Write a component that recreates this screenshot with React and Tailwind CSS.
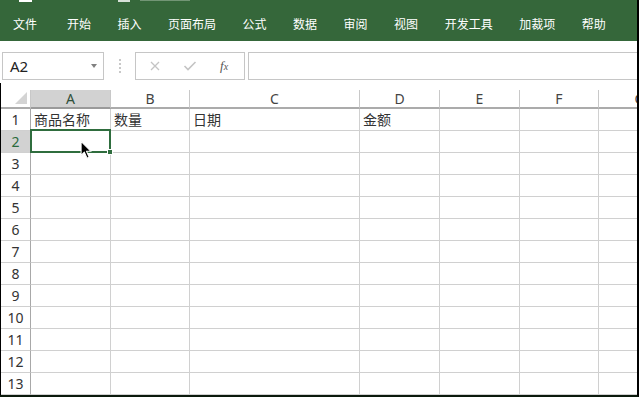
import React from 'react';

const tabs = ['文件', '开始', '插入', '页面布局', '公式', '数据', '审阅', '视图', '开发工具', '加裁项', '帮助'];
const cols = ['A', 'B', 'C', 'D', 'E', 'F', 'G'];
const rows = Array.from({ length: 13 }, (_, i) => i + 1);
const cjk = { fontFamily: '"Noto Sans CJK SC", "Noto Sans", sans-serif' };
const latin = { fontFamily: '"Noto Sans", "Liberation Sans", "Noto Sans CJK SC", sans-serif' };

const cellText = { 1: { A: '商品名称', B: '数量', C: '日期', D: '金额' } };

const Cursor = () => (
  <svg width="13" height="20" viewBox="0 0 12 18" className="absolute left-[80px] top-[140px]">
    <path d="M1 1 L1 14 L4 11 L6.5 16.5 L8.5 15.6 L6 10.2 L10.2 10.2 Z" fill="#000" stroke="#fff" strokeWidth="1" strokeLinejoin="round" />
  </svg>
);

export default function App() {
  return (
    <div className="relative w-[639px] h-[397px] overflow-hidden bg-white border-r-2 border-b-2 border-r-black border-b-[#0b1a0c]" style={cjk}>
      {/* ribbon */}
      <div className="h-[41px] bg-[#35673a] flex flex-col">
        <div className="h-[3px] flex items-start">
          <div className="ml-[19px] w-[13px] h-[2px] bg-white" />
          <div className="ml-[86px] w-[12px] h-[2px] bg-white/80" />
          <div className="ml-[10px] w-[50px] h-[1px] bg-white/30" />
        </div>
        <div className="flex items-center pl-[13px] pt-[14px] text-[12px] leading-[14px] text-white">
          {tabs.map((t, i) => (
            <span key={t} className={i === 0 ? 'mr-[30px]' : 'mr-[26.5px]'}>{t}</span>
          ))}
        </div>
      </div>

      {/* formula bar */}
      <div className="h-[42px] flex items-start pt-[11px] pl-[2px]">
        <div className="w-[102px] h-[28px] border border-[#c6c6c6] flex items-center justify-between pl-[7px] pr-[6px]">
          <span className="text-[15px] text-[#222]" style={latin}>A2</span>
          <span className="w-0 h-0 border-l-[3.5px] border-r-[3.5px] border-t-[4px] border-l-transparent border-r-transparent border-t-[#808080]" />
        </div>
        <div className="w-[31px] h-[28px] flex flex-col items-center justify-center gap-[2px]">
          <span className="w-[2px] h-[2px] bg-[#c8c8c8]" />
          <span className="w-[2px] h-[2px] bg-[#c8c8c8]" />
          <span className="w-[2px] h-[2px] bg-[#c8c8c8]" />
          <span className="w-[2px] h-[2px] bg-[#c8c8c8]" />
        </div>
        <div className="w-[110px] h-[28px] border border-[#c6c6c6] flex items-center pl-[13px]">
          <svg width="12" height="12" viewBox="0 0 12 12">
            <path d="M2 2 L10 10 M10 2 L2 10" stroke="#c4c4c4" strokeWidth="1.3" />
          </svg>
          <svg width="14" height="12" viewBox="0 0 14 12" className="ml-[22px]">
            <path d="M1.5 6 L5 9.5 L12.5 2" stroke="#c4c4c4" strokeWidth="1.6" fill="none" />
          </svg>
          <span className="ml-[23px] text-[13px] italic text-[#555]" style={{ fontFamily: '"Liberation Serif", serif' }}>
            f<span className="text-[10px]">x</span>
          </span>
        </div>
        <div className="ml-[3px] flex-1 h-[28px] border border-r-0 border-[#c6c6c6]" />
      </div>

      {/* sheet */}
      <div className="relative border-l border-l-black pt-[7px] overflow-hidden">
        <div className="grid w-[680px] grid-cols-[30px_80px_79px_170px_80px_80px_79px_82px]" style={latin}>
          {/* header row */}
          <div className="relative h-[19px] border-b-2 border-b-[#ababab] border-r border-r-[#c8c8c8]">
            <svg width="13" height="13" viewBox="0 0 13 13" className="absolute left-[14px] top-[2px]">
              <path d="M0 12 L12 12 L12 0 Z" fill="#d4d4d4" />
            </svg>
          </div>
          {cols.map(c => (
            <div
              key={c}
              className={`h-[19px] border-b-2 border-r border-r-[#c8c8c8] flex items-center justify-center text-[14px] leading-none ${
                c === 'A' ? 'bg-[#d2d2d2] border-b-[#9a9a9a] text-[#30503a]' : 'border-b-[#ababab] text-[#444]'
              }`}
            >
              {c}
            </div>
          ))}

          {rows.map(r => (
            <React.Fragment key={r}>
              <div
                className={`h-[22px] border-b border-b-[#d0d0d0] border-r border-r-[#a8a8a8] flex items-center justify-center text-[14px] leading-none ${
                  r === 2 ? 'bg-[#d2d2d2] text-[#2b6a3d]' : 'text-[#333]'
                }`}
              >
                {r}
              </div>
              {cols.map(c => (
                <div
                  key={c}
                  className="h-[22px] border-b border-b-[#d0d0d0] border-r border-r-[#d0d0d0] flex items-center pl-[3px] text-[14px] text-[#333] overflow-hidden whitespace-nowrap"
                  style={cjk}
                >
                  {cellText[r]?.[c]}
                </div>
              ))}
            </React.Fragment>
          ))}
        </div>
      </div>

      {/* selected cell A2 */}
      <div className="absolute left-[30px] top-[129px] w-[81px] h-[24px] border-2 border-[#2f6d3e]" />
      <div className="absolute left-[107px] top-[149px] w-[6px] h-[6px] bg-[#2f6d3e] border border-white" />
      <Cursor />
    </div>
  );
}
